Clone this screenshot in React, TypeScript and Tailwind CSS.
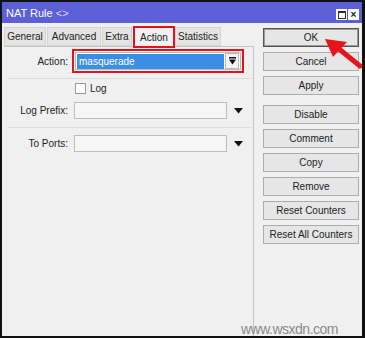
import React from "react";

function Btn({ label, def = false }: { label: string; def?: boolean }) {
  return (
    <div
      className={`h-[19px] w-[96px] flex items-center justify-center bg-[#e6e6e6] text-[10px] text-[#222] border ${
        def ? "border-[#555] shadow-[inset_0_0_0_1px_#9a9a9a]" : "border-[#adadad]"
      }`}
    >
      {label}
    </div>
  );
}

function DropArrow() {
  return (
    <svg width="9" height="6" viewBox="0 0 9 6">
      <path d="M0 0 H9 L4.5 5.5 Z" fill="#111" />
    </svg>
  );
}

export default function App() {
  return (
    <div
      className="w-[365px] h-[338px] bg-[#111] pt-[2px] pl-[2px] pr-[3px] pb-[2px] relative overflow-hidden"
      style={{ fontFamily: '"Liberation Sans", Arial, sans-serif' }}
    >
      <div className="w-full h-full bg-[#f0f0f0] flex flex-col">
        {/* title bar */}
        <div className="h-[21px] bg-[#5b60d6] flex items-center justify-between pl-[4px] pr-[3px] shrink-0">
          <span className="text-white text-[11px] leading-none mt-[1px]">
            NAT Rule <span className="text-[#d8daf6]">&lt;&gt;</span>
          </span>
          <div className="flex gap-[1px] mt-[4px]">
            <div className="w-[11px] h-[11px] bg-white flex items-center justify-center">
              <div className="w-[8px] h-[8px] border border-[#333] border-t-2" />
            </div>
            <div className="w-[11px] h-[11px] bg-white flex items-center justify-center text-[10px] font-bold leading-none text-[#222]">
              ×
            </div>
          </div>
        </div>
        <div className="flex flex-1">
          {/* left */}
          <div className="w-[252px] pl-[2px] pt-[3px] flex flex-col">
            <div className="flex items-end h-[20px] text-[10px] text-[#222]">
              <div className="h-[19px] w-[42px] bg-[#e4e4e4] border border-[#d4d4d4] flex items-center justify-center">General</div>
              <div className="h-[19px] w-[54px] ml-[1px] bg-[#e4e4e4] border border-[#d4d4d4] flex items-center justify-center">Advanced</div>
              <div className="h-[19px] w-[30px] ml-[1px] bg-[#e4e4e4] border border-[#d4d4d4] flex items-center justify-center">Extra</div>
              <div className="h-[22px] w-[42px] ml-[1px] border-2 border-[#e2141b] bg-[#f0f0f0] flex items-center justify-center -mb-[2px] relative z-10">
                Action
              </div>
              <div className="h-[19px] w-[46px] bg-[#e4e4e4] border border-[#d4d4d4] flex items-center justify-center">Statistics</div>
            </div>
            <div className="flex-1 border-t border-r border-[#c4c4c4] flex flex-col text-[10px] text-[#222]">
              {/* Action row */}
              <div className="flex items-center mt-[2px] h-[24px]">
                <div className="w-[66px] text-right pr-[2px]">Action:</div>
                <div className="ml-[2px] w-[172px] h-[24px] border-2 border-[#e2141b] flex items-center p-[1px]">
                  <div className="flex-1 h-full bg-white border border-[#bdbdbd] flex items-center pl-[1px] pr-[1px]">
                    <div className="flex-1 h-[15px] bg-[#3a8ee6] text-white flex items-center pl-[2px]">masquerade</div>
                    <div className="w-[14px] h-[16px] ml-[1px] bg-[#f4f4f4] border border-[#bdbdbd] flex items-center justify-center">
                      <svg width="7" height="8" viewBox="0 0 7 8">
                        <rect x="0" y="0" width="7" height="1.5" fill="#111" />
                        <path d="M0 2.5 H7 L3.5 7.5 Z" fill="#111" />
                      </svg>
                    </div>
                  </div>
                </div>
              </div>
              <div className="mt-[5px] ml-[4px] mr-[2px] border-t border-[#dcdcdc]" />
              {/* Log */}
              <div className="flex items-center mt-[3px] h-[12px]">
                <div className="w-[71px]" />
                <div className="w-[11px] h-[11px] bg-white border border-[#9a9a9a]" />
                <span className="ml-[4px]">Log</span>
              </div>
              {/* Log Prefix */}
              <div className="flex items-center mt-[8px] h-[17px]">
                <div className="w-[66px] text-right pr-[2px]">Log Prefix:</div>
                <div className="ml-[4px] w-[153px] h-[17px] bg-[#f6f6f6] border border-[#bdbdbd]" />
                <div className="ml-[7px]"><DropArrow /></div>
              </div>
              <div className="mt-[8px] ml-[4px] mr-[2px] border-t border-[#dcdcdc]" />
              {/* To Ports */}
              <div className="flex items-center mt-[7px] h-[17px]">
                <div className="w-[66px] text-right pr-[2px]">To Ports:</div>
                <div className="ml-[4px] w-[153px] h-[17px] bg-[#f6f6f6] border border-[#bdbdbd]" />
                <div className="ml-[7px]"><DropArrow /></div>
              </div>
            </div>
          </div>
          {/* right */}
          <div className="flex-1 pl-[9px] pt-[5px] flex flex-col">
            <div className="flex flex-col gap-[5px]">
              <Btn label="OK" def />
              <Btn label="Cancel" />
              <Btn label="Apply" />
            </div>
            <div className="flex flex-col gap-[5px] mt-[10px]">
              <Btn label="Disable" />
              <Btn label="Comment" />
              <Btn label="Copy" />
              <Btn label="Remove" />
              <Btn label="Reset Counters" />
              <Btn label="Reset All Counters" />
            </div>
          </div>
        </div>
      </div>
      {/* red arrow */}
      <svg className="absolute left-0 top-0" width="365" height="338" viewBox="0 0 365 338">
        <path d="M360 66 L339 49" stroke="#e8141c" strokeWidth="5" strokeLinecap="round" />
        <path d="M325 39 L347 42 L333 57 Z" fill="#e8141c" />
      </svg>
      <div className="absolute left-[241px] top-[322px] text-[14px] text-[#8a8a8a] leading-none tracking-[-0.5px]">
        www.wsxdn.com
      </div>
    </div>
  );
}
